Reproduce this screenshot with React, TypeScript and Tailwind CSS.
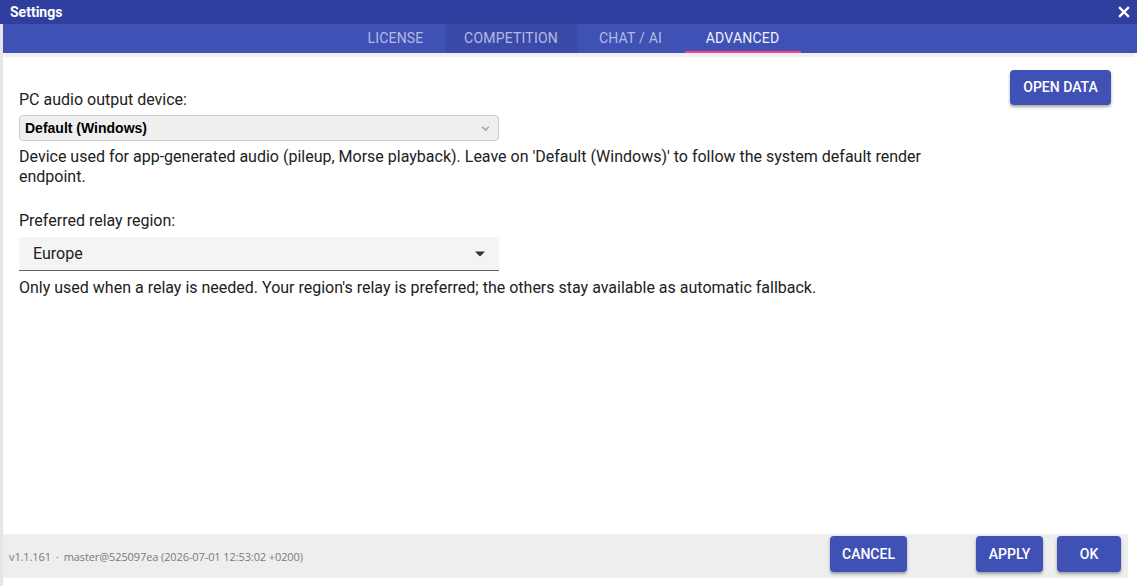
import React, { useState } from 'react';

const tabs = [
  { label: 'LICENSE', w: 'w-[100px]' },
  { label: 'COMPETITION', w: 'w-[131px]' },
  { label: 'CHAT / AI', w: 'w-[108px]' },
  { label: 'ADVANCED', w: 'w-[116px]' },
];

const App = () => {
  const [active, setActive] = useState('ADVANCED');
  const [region, setRegion] = useState('Europe');

  return (
    <div className="w-[1137px] h-[586px] flex flex-col bg-white font-['Roboto',sans-serif] overflow-hidden">
      {/* title bar */}
      <div className="h-[24px] flex items-center justify-between bg-[#303f9f] pl-[10px] pr-[7px] shrink-0">
        <span className="text-white text-[14px] font-bold">Settings</span>
        <svg width="12" height="12" viewBox="0 0 12 12" className="text-white">
          <path d="M2 2 L10 10 M10 2 L2 10" stroke="currentColor" strokeWidth="2.4" strokeLinecap="square" />
        </svg>
      </div>

      <div className="flex-1 flex flex-col border-l-[3px] border-[#e6e6e6]">
        {/* tabs */}
        <div className="h-[29px] bg-[#3f51b5] flex justify-center pl-[6px] shrink-0">
          {tabs.map((t) => (
            <button
              key={t.label}
              onClick={() => setActive(t.label)}
              className={`${t.w} relative h-full flex items-center justify-center text-[14px] tracking-[0.2px] ${
                t.label === 'COMPETITION' ? 'bg-[#3a4aa9]' : ''
              } ${active === t.label ? 'text-[#eef0fa]' : 'text-[#b4bbe3]'}`}
            >
              {t.label}
              {active === t.label && <span className="absolute left-0 right-0 bottom-0 h-[2px] bg-[#ff4081]" />}
            </button>
          ))}
        </div>
        <div className="h-[4px] bg-[#f0f0f0] mr-[3px] shrink-0" />

        {/* content */}
        <div className="flex-1 flex pl-[16px] pr-[26px] pt-[13px]">
          <div className="w-[936px] pt-[20px] text-[16px] text-[#212121]">
            <div className="leading-[20px]">PC audio output device:</div>
            <div className="mt-[5px] w-[480px] h-[26px] flex items-center justify-between bg-[#efefef] border border-[#cfcfcf] rounded-[4px] pl-[5px] pr-[7px]">
              <span className="text-[14px] font-bold font-['Liberation_Sans',sans-serif] text-black">Default (Windows)</span>
              <svg width="11" height="11" viewBox="0 0 10 10">
                <path d="M2 3.5 L5 6.5 L8 3.5" fill="none" stroke="#a8a8a8" strokeWidth="1.4" />
              </svg>
            </div>
            <p className="mt-[6px] leading-[20px]">
              Device used for app-generated audio (pileup, Morse playback). Leave on 'Default (Windows)' to follow the system default render endpoint.
            </p>

            <div className="mt-[24px] leading-[20px]">Preferred relay region:</div>
            <button
              onClick={() => setRegion(region)}
              className="mt-[6px] w-[480px] h-[34px] flex items-center justify-between bg-[#f4f4f4] border-b border-[#616161] pl-[14px] pr-[14px] text-left"
            >
              <span className="text-[16px] text-[#212121]">{region}</span>
              <svg width="10" height="6" viewBox="0 0 10 5">
                <path d="M0 0 L10 0 L5 5 Z" fill="#333" />
              </svg>
            </button>
            <p className="mt-[7px] leading-[20px]">
              Only used when a relay is needed. Your region's relay is preferred; the others stay available as automatic fallback.
            </p>
          </div>
          <div className="flex-1 flex justify-end">
            <button className="w-[101px] h-[35px] bg-[#3f51b5] text-white text-[14px] font-medium rounded-[4px] shadow-[0_2px_3px_rgba(0,0,0,0.35)]">
              OPEN DATA
            </button>
          </div>
        </div>

        {/* footer */}
        <div className="h-[44px] mr-[9px] bg-[#eeeeee] flex items-start pt-[2px] pl-[6px] pr-[7px] shrink-0">
          <span className="self-center text-[11px] text-[#7a7a7a] font-['Open_Sans',sans-serif] tracking-[-0.1px]">
            v1.1.161<span className="mx-[5px]">·</span>master@525097ea (2026-07-01 12:53:02 +0200)
          </span>
          <div className="flex-1" />
          <button className="w-[77px] h-[36px] bg-[#3f51b5] text-white text-[14px] font-medium rounded-[4px] shadow-[0_2px_3px_rgba(0,0,0,0.35)]">
            CANCEL
          </button>
          <button className="ml-[69px] w-[67px] h-[36px] bg-[#3f51b5] text-white text-[14px] font-medium rounded-[4px] shadow-[0_2px_3px_rgba(0,0,0,0.35)]">
            APPLY
          </button>
          <button className="ml-[14px] w-[64px] h-[36px] bg-[#3f51b5] text-white text-[14px] font-medium rounded-[4px] shadow-[0_2px_3px_rgba(0,0,0,0.35)]">
            OK
          </button>
        </div>
        <div className="h-[8px] shrink-0" />
      </div>
    </div>
  );
};

export default App;
